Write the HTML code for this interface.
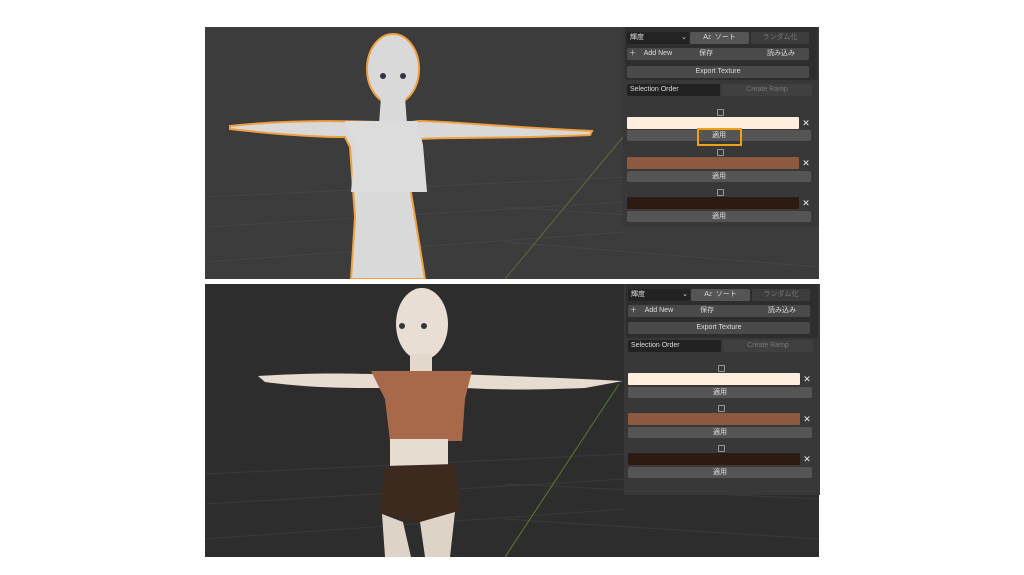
<!DOCTYPE html>
<html><head><meta charset="utf-8"><style>
body{margin:0;background:#fff;width:1024px;height:575px;position:relative;overflow:hidden;font-family:"Liberation Sans","Noto Sans CJK JP",sans-serif}
.a{position:absolute}
.vp{position:absolute;left:205px;width:614px;overflow:hidden}
.pn{position:absolute;width:196px;background:#383838}
.pn div{position:absolute;font-size:7px;color:#ddd;text-align:center;line-height:12px;border-radius:2px}
.cb{width:5px;height:5px;border:1px solid #999;border-radius:1px!important}
.x{color:#eee!important;font-size:9px!important}
</style></head><body>

<div class="vp" style="top:27px;height:252px;background:#3c3c3c">
<svg width="614" height="252" class="a" style="left:0;top:0">
<g stroke="#464646" stroke-width="1" fill="none">
<path d="M0 170 L420 150 M0 200 L420 175 M0 235 L420 205 M300 180 L614 200 M300 215 L614 240"/>
</g>
<path d="M300 252 L418 110" stroke="#5a6a3a"/>
<g fill="#d9d9d9" stroke="#f0a040" stroke-width="2">
<path d="M25 99 C90 92 150 94 200 96 L214 94 C240 94 300 100 387 104 L385 108 C300 112 240 110 214 112 L198 116 L210 190 L220 252 L146 252 L150 190 L145 120 L140 110 C100 110 60 106 25 102Z"/>
<ellipse cx="188" cy="42" rx="26" ry="35"/>
<path d="M176 70 L200 70 L202 97 L174 97Z" stroke="none"/>
</g>
<path d="M140 94 L212 94 L218 118 L222 165 L146 165 L150 118Z" fill="#dcdcdc"/>
<circle cx="178" cy="49" r="3" fill="#334"/><circle cx="198" cy="49" r="3" fill="#334"/>
</svg>
</div>

<div class="vp" style="top:284px;height:273px;background:#2d2d2d">
<svg width="614" height="273" class="a" style="left:0;top:0">
<g stroke="#3a3a3a" stroke-width="1" fill="none">
<path d="M0 190 L420 170 M0 220 L420 195 M0 255 L420 225 M300 200 L614 215 M300 235 L614 255"/>
</g>
<path d="M300 273 L414 100" stroke="#5a7a30"/>
<path d="M53 92 C120 88 150 90 170 90 L250 90 C300 92 360 94 418 97 L380 104 C330 106 300 106 260 104 L160 104 C120 104 90 102 60 98Z" fill="#e6dcd0"/>
<ellipse cx="217" cy="40" rx="26" ry="36" fill="#e8ded3"/>
<rect x="205" y="70" width="22" height="20" fill="#e2d8cc"/>
<path d="M166 87 L267 87 L260 115 L257 157 L185 157 L180 115Z" fill="#a8694a"/>
<rect x="185" y="155" width="58" height="30" fill="#e6dcd0"/>
<path d="M180 182 L250 180 L256 226 L220 240 L175 230Z" fill="#3d2a1f"/>
<path d="M177 230 L198 238 L206 273 L180 273Z M215 238 L250 228 L245 273 L220 273Z" fill="#ddd3c7"/>
<circle cx="197" cy="42" r="3" fill="#334"/><circle cx="219" cy="42" r="3" fill="#334"/>
</svg>
</div>

<div class="pn" style="left:623px;top:27px;height:200px">
<div style="left:2px;top:0;width:192px;height:53px;background:#2e2e2e"></div>
<div style="left:4px;top:5px;width:62px;height:12px;background:#232323;text-align:left;padding-left:3px;box-sizing:border-box">輝度 <span style="float:right;padding-right:2px">⌄</span></div>
<div style="left:67px;top:5px;width:59px;height:12px;background:#555">A<span style="font-size:5px">Z</span>&nbsp;&nbsp;ソート</div>
<div style="left:128px;top:5px;width:58px;height:12px;background:#3d3d3d;color:#777">ランダム化</div>
<div style="left:4px;top:21px;width:182px;height:12px;background:#4a4a4a;text-align:left">&nbsp;＋&nbsp;&nbsp;&nbsp;&nbsp;Add New<span class="a" style="left:72px">保存</span><span class="a" style="left:140px">読み込み</span></div>
<div style="left:4px;top:39px;width:182px;height:12px;background:#4a4a4a">Export Texture</div>
<div style="left:4px;top:57px;width:93px;height:12px;background:#222;text-align:left;padding-left:3px;box-sizing:border-box">Selection Order</div>
<div style="left:99px;top:57px;width:90px;height:12px;background:#404040;color:#777">Create Ramp</div>
<div class="cb" style="left:94px;top:82px"></div>
<div style="left:4px;top:90px;width:172px;height:12px;background:#fdeedd;border-radius:1px"></div>
<div class="x" style="left:178px;top:90px;width:10px">✕</div>
<div style="left:4px;top:103px;width:184px;height:11px;background:#555;line-height:11px">適用</div>
<div style="left:74px;top:101px;width:41px;height:14px;border:2px solid #f0a010;border-radius:0"></div>
<div class="cb" style="left:94px;top:122px"></div>
<div style="left:4px;top:130px;width:172px;height:12px;background:#8b5a41;border-radius:1px"></div>
<div class="x" style="left:178px;top:130px;width:10px">✕</div>
<div style="left:4px;top:144px;width:184px;height:11px;background:#555;line-height:11px">適用</div>
<div class="cb" style="left:94px;top:162px"></div>
<div style="left:4px;top:170px;width:172px;height:12px;background:#2c1b13;border-radius:1px"></div>
<div class="x" style="left:178px;top:170px;width:10px">✕</div>
<div style="left:4px;top:184px;width:184px;height:11px;background:#555;line-height:11px">適用</div>
</div>

<div class="pn" style="left:624px;top:284px;height:211px">
<div style="left:2px;top:0;width:192px;height:54px;background:#2e2e2e"></div>
<div style="left:4px;top:5px;width:62px;height:12px;background:#232323;text-align:left;padding-left:3px;box-sizing:border-box">輝度 <span style="float:right;padding-right:2px">⌄</span></div>
<div style="left:67px;top:5px;width:59px;height:12px;background:#555">A<span style="font-size:5px">Z</span>&nbsp;&nbsp;ソート</div>
<div style="left:128px;top:5px;width:58px;height:12px;background:#3d3d3d;color:#777">ランダム化</div>
<div style="left:4px;top:21px;width:182px;height:12px;background:#4a4a4a;text-align:left">&nbsp;＋&nbsp;&nbsp;&nbsp;&nbsp;Add New<span class="a" style="left:72px">保存</span><span class="a" style="left:140px">読み込み</span></div>
<div style="left:4px;top:38px;width:182px;height:12px;background:#4a4a4a">Export Texture</div>
<div style="left:4px;top:56px;width:93px;height:12px;background:#222;text-align:left;padding-left:3px;box-sizing:border-box">Selection Order</div>
<div style="left:99px;top:56px;width:90px;height:12px;background:#404040;color:#777">Create Ramp</div>
<div class="cb" style="left:94px;top:81px"></div>
<div style="left:4px;top:89px;width:172px;height:12px;background:#fdeedd;border-radius:1px"></div>
<div class="x" style="left:178px;top:89px;width:10px">✕</div>
<div style="left:4px;top:103px;width:184px;height:11px;background:#555;line-height:11px">適用</div>
<div class="cb" style="left:94px;top:121px"></div>
<div style="left:4px;top:129px;width:172px;height:12px;background:#8b5a41;border-radius:1px"></div>
<div class="x" style="left:178px;top:129px;width:10px">✕</div>
<div style="left:4px;top:143px;width:184px;height:11px;background:#555;line-height:11px">適用</div>
<div class="cb" style="left:94px;top:161px"></div>
<div style="left:4px;top:169px;width:172px;height:12px;background:#2c1b13;border-radius:1px"></div>
<div class="x" style="left:178px;top:169px;width:10px">✕</div>
<div style="left:4px;top:183px;width:184px;height:11px;background:#555;line-height:11px">適用</div>
</div>
</body></html>
